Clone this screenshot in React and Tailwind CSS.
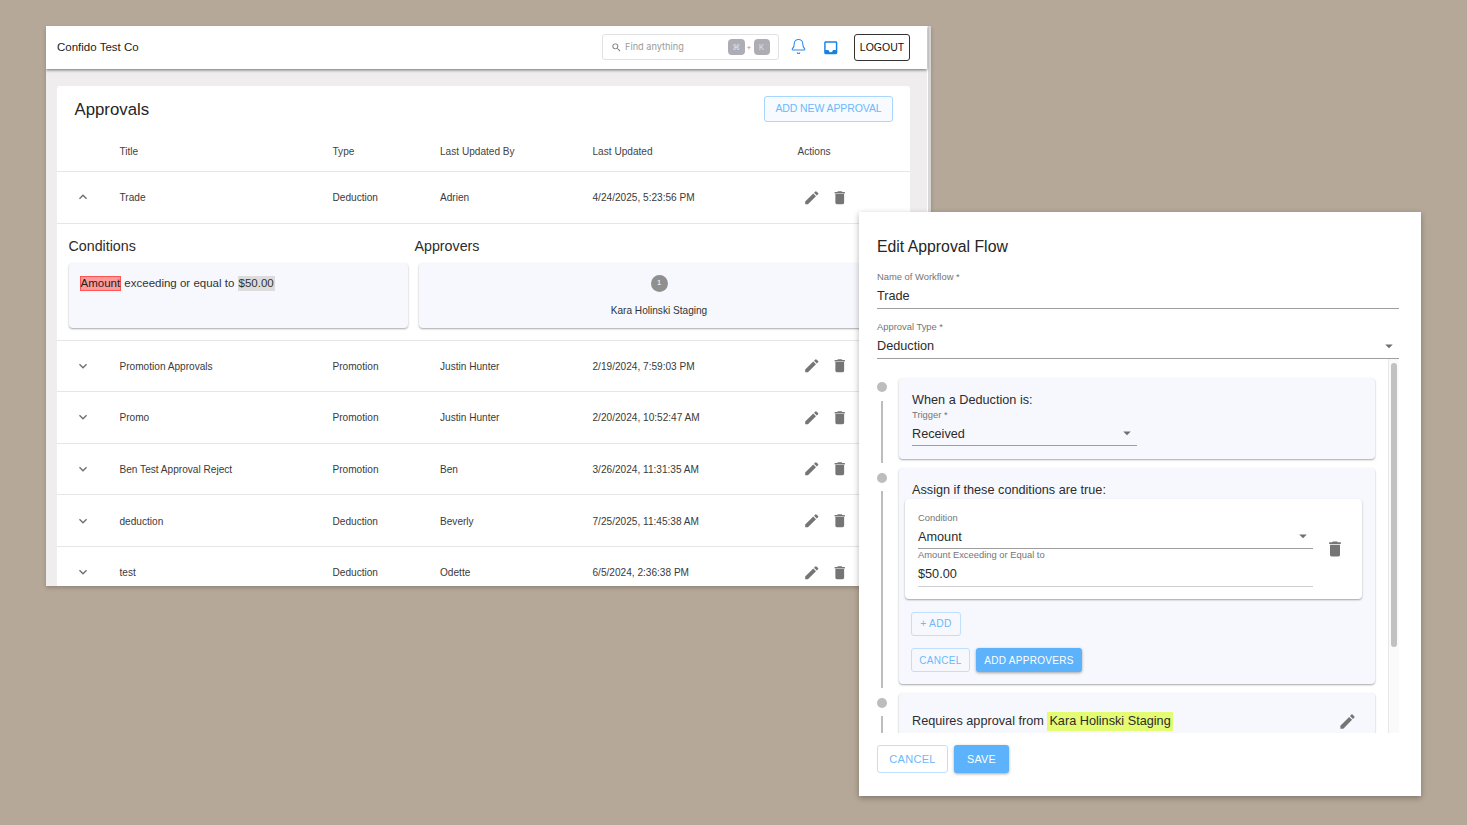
import React from "react";
import { Bell } from "lucide-react";
import { MdEdit, MdDelete, MdExpandMore, MdExpandLess, MdArrowDropDown, MdInbox, MdSearch } from "react-icons/md";

const rows = [
  ["Promotion Approvals", "Promotion", "Justin Hunter", "2/19/2024, 7:59:03 PM"],
  ["Promo", "Promotion", "Justin Hunter", "2/20/2024, 10:52:47 AM"],
  ["Ben Test Approval Reject", "Promotion", "Ben", "3/26/2024, 11:31:35 AM"],
  ["deduction", "Deduction", "Beverly", "7/25/2025, 11:45:38 AM"],
  ["test", "Deduction", "Odette", "6/5/2024, 2:36:38 PM"],
];

function Row({ open, cells }) {
  return (
    <div className="grid grid-cols-[62.5px_213px_107.5px_152.5px_205px_1fr] items-center h-[51.6px] shrink-0 border-b border-[#e6e6e6] text-[10.1px] text-[#3a3a3a]">
      <div className="pl-[18px] text-[#6f6f6f]">
        {open ? <MdExpandLess className="w-[16px] h-[16px]" /> : <MdExpandMore className="w-[16px] h-[16px]" />}
      </div>
      {cells.map((c) => (
        <div key={c} className="pt-[1px]">{c}</div>
      ))}
      <div className="flex items-center gap-[11px] pl-[5.25px] text-[#757575]">
        <MdEdit className="w-[17.5px] h-[17.5px]" />
        <MdDelete className="w-[17.5px] h-[17.5px]" />
      </div>
    </div>
  );
}

function Dot({ line, first }) {
  return (
    <div className="w-[10px] flex flex-col items-center shrink-0">
      <div className={`w-[10px] h-[10px] rounded-full bg-[#bdbdbd] ${first ? "mt-[4px]" : "mt-[5px]"}`} />
      <div className={`w-[2px] bg-[#bdbdbd] ${first ? "mt-[9px]" : "mt-[8px]"} ${line}`} />
    </div>
  );
}

function Card({ className, children }) {
  return (
    <div className={`rounded-[4px] bg-[#f7f8fd] shadow-[0_1px_2px_rgba(0,0,0,0.35)] ${className}`}>{children}</div>
  );
}

function Field({ label, value, caret, className, tall, lineColor = "border-[#9e9e9e]" }) {
  return (
    <div className={className}>
      <div className="text-[9.4px] leading-[11px] text-[#757575]">{label}</div>
      <div className={`relative text-[12.7px] leading-[17px] text-[#2c2c2c] border-b ${tall ? "h-[27px] pt-[6px]" : "h-[26px] pt-[6px]"} ${lineColor}`}>
        {value}
        {caret && <MdArrowDropDown className={`absolute right-[1px] w-[18px] h-[18px] text-[#6f6f6f] ${tall ? "top-[5px]" : "top-[4px]"}`} />}
      </div>
    </div>
  );
}

function OutlineBtn({ className, children }) {
  return (
    <div className={`flex items-center justify-center rounded-[3px] border border-[#bfdffc] text-[#6db9fb] tracking-[0.3px] ${className}`}>{children}</div>
  );
}

function FillBtn({ className, children }) {
  return (
    <div className={`flex items-center justify-center rounded-[3px] bg-[#5cb2fb] text-white tracking-[0.3px] shadow-[0_1px_3px_rgba(0,0,0,0.35)] ${className}`}>{children}</div>
  );
}

export default function App() {
  return (
    <div className="relative w-[1467px] h-[825px] overflow-hidden bg-[#b5a898] pt-[26px] pl-[46px] font-['Liberation_Sans',sans-serif]">
      <div className="w-[885px] h-[560px] flex overflow-hidden bg-[#efeded] shadow-[0_2px_4px_rgba(0,0,0,0.2)]">
        <div className="w-[881px] shrink-0 flex flex-col">
          <header className="h-[43px] shrink-0 flex items-center bg-white pl-[11px] pr-[17px] shadow-[0_1px_3px_rgba(0,0,0,0.55)] relative">
            <div className="text-[11.5px] text-[#222]">Confido Test Co</div>
            <div className="ml-auto w-[177px] h-[26px] mb-[1px] flex items-center rounded-[3px] border border-[#e1e1e4] pl-[8px] pr-[8px] font-['Inter',sans-serif] text-[9.2px] text-[#9b9b9b]">
              <MdSearch className="w-[11px] h-[11px] text-[#777] mr-[3.5px]" />
              <span>Find anything</span>
              <span className="ml-auto w-[16.5px] h-[16px] rounded-[4px] bg-[#adadb5] text-[#dedee2] text-[8px] flex items-center justify-center">⌘</span>
              <span className="w-[9px] text-center text-[8px]">+</span>
              <span className="w-[16px] h-[16px] rounded-[4px] bg-[#adadb5] text-[#dedee2] text-[8px] flex items-center justify-center">K</span>
            </div>
            <Bell className="w-[17px] h-[17px] ml-[11px] mb-[2px] text-[#2a8cf0]" strokeWidth={1.5} />
            <MdInbox className="w-[17.5px] h-[17.5px] ml-[15px] text-[#1a80e5]" />
            <div className="ml-[15px] w-[56px] h-[27px] rounded-[3px] border border-[#333] flex items-center justify-center text-[10.5px] text-[#111]">LOGOUT</div>
          </header>
          <div className="flex-1 min-h-0 overflow-hidden pl-[11px] pr-[17px] pt-[17px]">
            <main className="bg-white rounded-[3px] h-[600px]">
              <div className="h-[47px] pb-[2px] flex items-center pl-[17.5px] pr-[17px]">
                <h1 className="text-[16.8px] mt-[2px] text-[#252525]">Approvals</h1>
                <div className="ml-auto w-[129px] h-[26px] pt-[1px] flex items-center justify-center rounded-[3px] border border-[#a9d6fc] bg-[#f7fbff] text-[10.5px] text-[#6db9fb] tracking-[-0.1px]">ADD NEW APPROVAL</div>
              </div>
              <div className="grid grid-cols-[62.5px_213px_107.5px_152.5px_205px_1fr] items-center h-[39px] border-b border-[#e6e6e6] text-[10.1px] text-[#444]">
                <div />
                <div>Title</div>
                <div>Type</div>
                <div>Last Updated By</div>
                <div>Last Updated</div>
                <div>Actions</div>
              </div>
              <Row open cells={["Trade", "Deduction", "Adrien", "4/24/2025, 5:23:56 PM"]} />
              <div className="h-[117px] border-b border-[#e6e6e6] px-[11.5px] pt-[14px]">
                <div className="grid grid-cols-[346px_1fr] text-[14.25px] leading-[17px] text-[#2c2c2c]">
                  <div>Conditions</div>
                  <div>Approvers</div>
                </div>
                <div className="grid grid-cols-[339.5px_480px] gap-[11px] mt-[8px]">
                  <Card className="h-[65px] px-[11px] pt-[13px] text-[11.5px] leading-[15px] text-[#333]">
                    <span className="bg-[#ff9a9a] border border-[#f55] text-[#222] leading-[13px] inline-block">Amount</span>
                    <span> exceeding or equal to </span>
                    <span className="bg-[#dcdcdc] px-[1px] inline-block">$50.00</span>
                  </Card>
                  <Card className="h-[65px] flex flex-col items-center pt-[12px]">
                    <div className="w-[17px] h-[17px] rounded-full bg-[#8f8f8f] text-white text-[7.5px] flex items-center justify-center">1</div>
                    <div className="text-[10.1px] text-[#333] mt-[11px]">Kara Holinski Staging</div>
                  </Card>
                </div>
              </div>
              {rows.map((r) => (
                <Row key={r[0]} cells={r} />
              ))}
            </main>
          </div>
        </div>
        <div className="w-[4px] bg-[#d9d6d6] border-l border-white" />
      </div>

      <div className="absolute left-[859px] top-[212px] w-[562px] h-[584px] bg-white flex flex-col pl-[18px] pr-[22px] shadow-[0_2px_6px_rgba(0,0,0,0.3)]">
        <h2 className="text-[15.8px] leading-[20px] mt-[25px] text-[#252525]">Edit Approval Flow</h2>
        <Field className="mt-[14px]" tall label="Name of Workflow *" value="Trade" />
        <Field className="mt-[12px]" tall label="Approval Type *" value="Deduction" caret />
        <div className="flex h-[374px] overflow-hidden">
          <div className="flex-1 min-w-0 overflow-hidden pt-[19px] pr-[13px]">
            <div className="flex gap-[12px] h-[90px]">
              <Dot first line="h-[62px]" />
              <Card className="flex-1 h-[81px] px-[13px] pt-[15px]">
                <div className="text-[12.7px] leading-[15px] text-[#2c2c2c]">When a Deduction is:</div>
                <Field className="w-[225px] mt-[1px]" label="Trigger *" value="Received" caret />
              </Card>
            </div>
            <div className="flex gap-[12px] h-[225px]">
              <Dot line="h-[197px]" />
              <Card className="flex-1 h-[216px] pl-[6px] pr-[13px] pt-[15px]">
                <div className="text-[12.7px] leading-[15px] pl-[7px] text-[#2c2c2c]">Assign if these conditions are true:</div>
                <div className="flex items-center h-[100px] mt-[1px] rounded-[4px] bg-white shadow-[0_1px_2px_rgba(0,0,0,0.35)] pl-[13px] pr-[17px]">
                  <div className="w-[395px]">
                    <Field label="Condition" value="Amount" caret />
                    <Field tall label="Amount Exceeding or Equal to" value="$50.00" lineColor="border-[#cfcfcf]" />
                  </div>
                  <MdDelete className="ml-auto w-[20px] h-[20px] text-[#757575]" />
                </div>
                <OutlineBtn className="ml-[6px] mt-[13px] w-[50px] h-[24px] text-[10.3px]">+ ADD</OutlineBtn>
                <div className="flex gap-[6px] ml-[6px] mt-[12px]">
                  <OutlineBtn className="w-[59px] h-[24px] text-[10px]">CANCEL</OutlineBtn>
                  <FillBtn className="w-[106px] h-[24px] text-[10px]">ADD APPROVERS</FillBtn>
                </div>
              </Card>
            </div>
            <div className="flex gap-[12px]">
              <Dot line="h-[60px]" />
              <Card className="flex-1 h-[80px] pl-[13px] pr-[18.5px] pt-[18.5px] flex items-start">
                <div className="text-[12.7px] leading-[19px] text-[#2c2c2c]">
                  Requires approval from <span className="inline-block bg-[#e4fb74] px-[2px]">Kara Holinski Staging</span>
                </div>
                <MdEdit className="ml-auto w-[19px] h-[19px] text-[#757575]" />
              </Card>
            </div>
          </div>
          <div className="w-[11px] shrink-0 bg-[#fafafa] border-l border-[#e8e8e8] pt-[4px] pl-[2px]">
            <div className="w-[6px] h-[284px] rounded-[3px] bg-[#c1c1c1]" />
          </div>
        </div>
        <div className="flex gap-[6px] mt-[12px]">
          <OutlineBtn className="w-[71px] h-[28px] text-[11px]">CANCEL</OutlineBtn>
          <FillBtn className="w-[55px] h-[28px] text-[10.8px]">SAVE</FillBtn>
        </div>
      </div>
    </div>
  );
}
